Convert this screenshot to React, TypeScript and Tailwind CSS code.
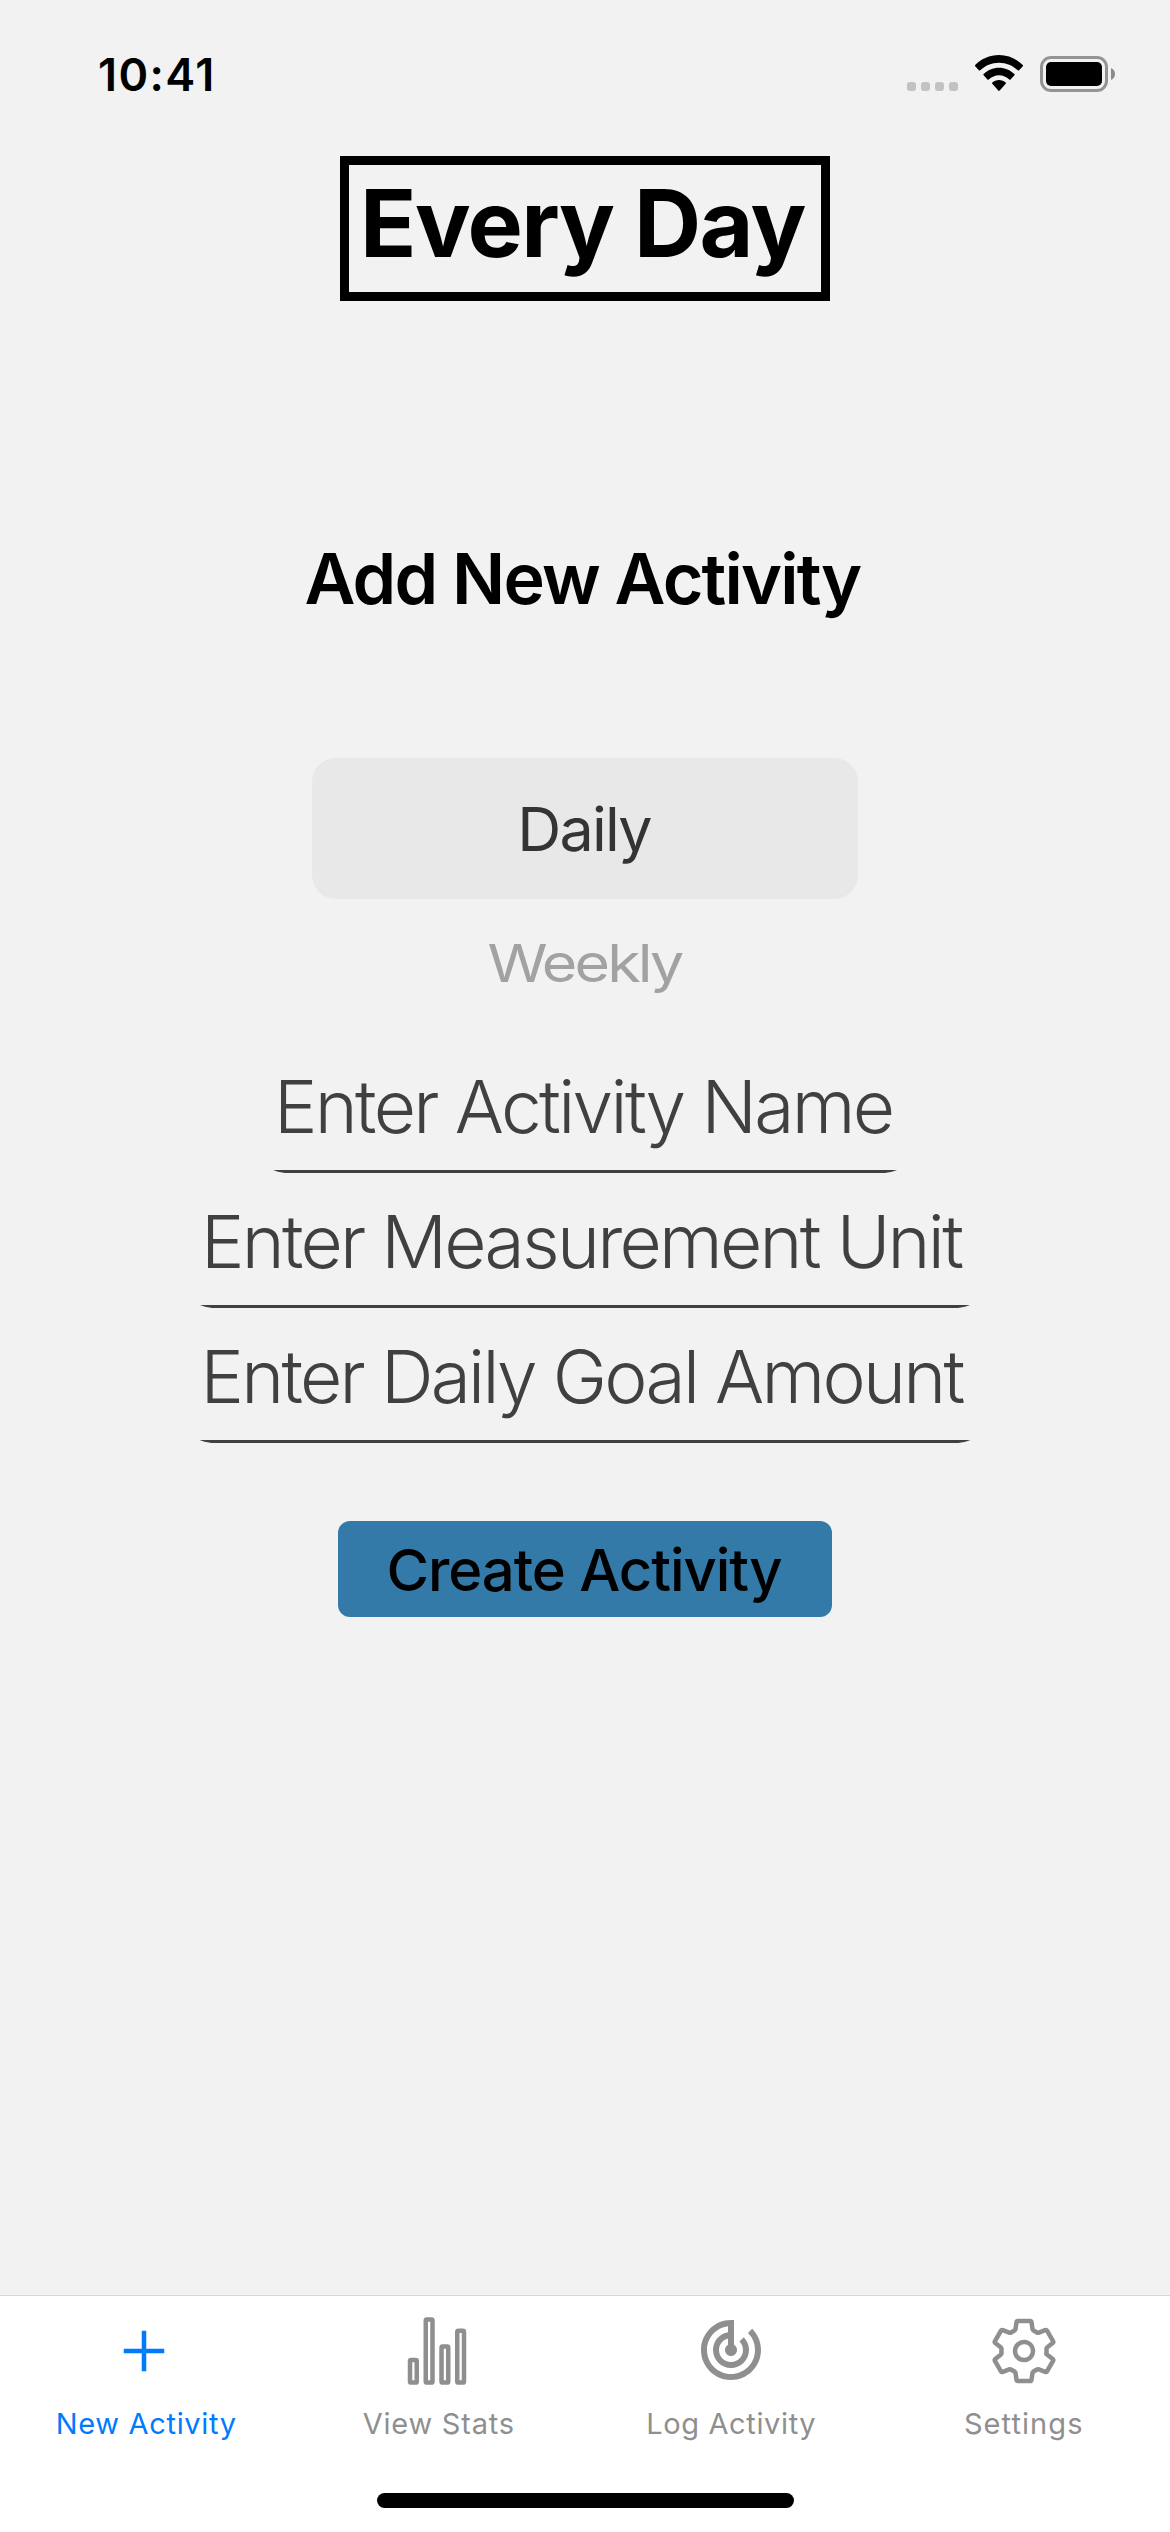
import type { ReactNode } from "react";
import { IoSettingsOutline, IoStatsChartOutline } from "react-icons/io5";
import { MdTrackChanges } from "react-icons/md";

function StatusBar() {
  return (
    <header className="flex h-[156px] shrink-0 items-start justify-between pl-[98px] pr-[55px] pt-[47px]">
      <span className="whitespace-nowrap text-[45px] font-semibold leading-[55px] tracking-[1.42px]">10:41</span>
      <div className="flex items-start pt-[8px]">
        <div className="mt-[27px] flex gap-[5px]">
          <span className="size-[9px] rounded-[3px] bg-[#c2c2c2]" />
          <span className="size-[9px] rounded-[3px] bg-[#c2c2c2]" />
          <span className="size-[9px] rounded-[3px] bg-[#c2c2c2]" />
          <span className="size-[9px] rounded-[3px] bg-[#c2c2c2]" />
        </div>
        <svg className="ml-[17px] h-[36px] w-[48px]" viewBox="0 0 48 36" fill="#000">
          <path d="M24 0C33.2 0 41.6 3.700 47.800 10c.4.4.4.9 0 1.300l-3.700 4c-.4.4-.9.4-1.300 0C37.900 10.500 31.300 7.700 24 7.700S10.100 10.500 5.200 15.300c-.4.4-.9.4-1.300 0L.2 11.300c-.4-.4-.4-.9 0-1.300C6.400 3.700 14.800 0 24 0z" />
          <path d="M24 12.700c5.900 0 11.300 2.300 15.400 6.300.4.4.4.9 0 1.300l-3.800 4.200c-.4.4-.9.4-1.300 0-2.800-2.600-6.400-4.300-10.300-4.300s-7.500 1.700-10.300 4.300c-.4.4-.9.4-1.300 0l-3.800-4.200c-.4-.4-.4-.9 0-1.300 4.100-4 9.500-6.300 15.400-6.300z" />
          <path d="M24 25c2.600 0 4.900.9 6.700 2.500.4.4.4.9 0 1.300l-6 6.800c-.4.4-1 .4-1.400 0l-6-6.800c-.4-.4-.4-.9 0-1.300 1.800-1.600 4.100-2.500 6.700-2.500z" />
        </svg>
        <div className="ml-[17px] mt-px h-[36px] w-[68px] rounded-[11px] border-[3px] border-[#949494] p-[3px]">
          <div className="h-full w-full rounded-[5px] bg-black" />
        </div>
        <svg className="ml-[3px] mt-[13px] h-[12px] w-[4px]" viewBox="0 0 4 12" fill="#8a8a8a">
          <path d="M0 0C2.400 1 4 3.300 4 6s-1.600 5-4 6z" />
        </svg>
      </div>
    </header>
  );
}

function Field({ label, className }: { label: string; className: string }) {
  return (
    <div className={`flex flex-col pt-[5px] ${className}`}>
      <span className="whitespace-nowrap pl-px text-[73px] font-light leading-[127px] text-[#404040]">{label}</span>
      <span className="h-[3px] bg-[#404040] [clip-path:polygon(0_0,100%_0,calc(100%_-_5px)_1.8px,calc(100%_-_12px)_100%,12px_100%,5px_1.8px)]" />
    </div>
  );
}

function Tab({ icon, label, className }: { icon: ReactNode; label: string; className: string }) {
  return (
    <button className={`flex flex-1 flex-col items-center text-[29px] leading-[36px] ${className}`}>
      {icon}
      <span className="mt-[19px] whitespace-nowrap">{label}</span>
    </button>
  );
}

export default function App() {
  return (
    <div className="flex h-[2532px] w-[1170px] flex-col bg-[#f2f2f2] font-['Inter',sans-serif] text-black">
      <StatusBar />
      <main className="flex flex-1 flex-col items-center">
        <h1 className="h-[145px] w-[490px] whitespace-nowrap border-[9px] border-black pl-[11px] text-[93px] font-bold leading-[116px] tracking-[-1.56px]">
          Every Day
        </h1>
        <h2 className="mt-[235px] whitespace-nowrap pr-[5px] text-[70px] font-semibold leading-[85px] tracking-[-1.84px]">
          Add New Activity
        </h2>
        <div className="mt-[137px] flex h-[141px] w-[546px] items-center justify-center rounded-[24px] bg-[#e8e8e8] pr-[2px] pt-px text-[61px] leading-[74px] tracking-[-1.78px] text-[#343434]">
          Daily
        </div>
        <div className="mt-[27px] scale-y-[0.86] pr-px text-[61px] leading-[74px] tracking-[-2.84px] text-[#a2a2a2]">
          Weekly
        </div>
        <div className="mt-[38px] flex flex-col items-center">
          <Field label="Enter Activity Name" className="w-[624px] tracking-[-2.65px]" />
          <Field label="Enter Measurement Unit" className="w-[770px] tracking-[-2.73px]" />
          <Field label="Enter Daily Goal Amount" className="w-[771px] tracking-[-2.71px]" />
        </div>
        <button className="mt-[78px] h-[96px] w-[494px] whitespace-nowrap rounded-[12px] bg-[#347aa8] pr-[2px] pt-[2px] text-[58px] font-medium leading-[94px] tracking-[-1.06px]">
          Create Activity
        </button>
      </main>
      <nav className="flex h-[237px] shrink-0 flex-col items-center border-t border-[#d8d8d8] bg-white">
        <div className="flex w-full pt-[19px]">
          <Tab
            label="New Activity"
            className="text-[#007aff] tracking-[0.67px]"
            icon={
              <svg className="mr-[5px] size-[72px]" viewBox="0 0 512 512" fill="none" stroke="currentColor" strokeWidth="32">
                <path d="M256 112v288M400 256H112" />
              </svg>
            }
          />
          <Tab
            label="View Stats"
            className="text-[#8f8f8f] tracking-[0.77px]"
            icon={<IoStatsChartOutline className="mr-[4px] size-[72px]" />}
          />
          <Tab
            label="Log Activity"
            className="text-[#8f8f8f] tracking-[0.63px]"
            icon={<MdTrackChanges className="relative -top-px size-[72px]" />}
          />
          <Tab
            label="Settings"
            className="text-[#8f8f8f] tracking-[1.08px]"
            icon={<IoSettingsOutline className="ml-px size-[72px]" />}
          />
        </div>
        <div className="mt-[51px] h-[15px] w-[417px] rounded-full bg-black" />
      </nav>
    </div>
  );
}
